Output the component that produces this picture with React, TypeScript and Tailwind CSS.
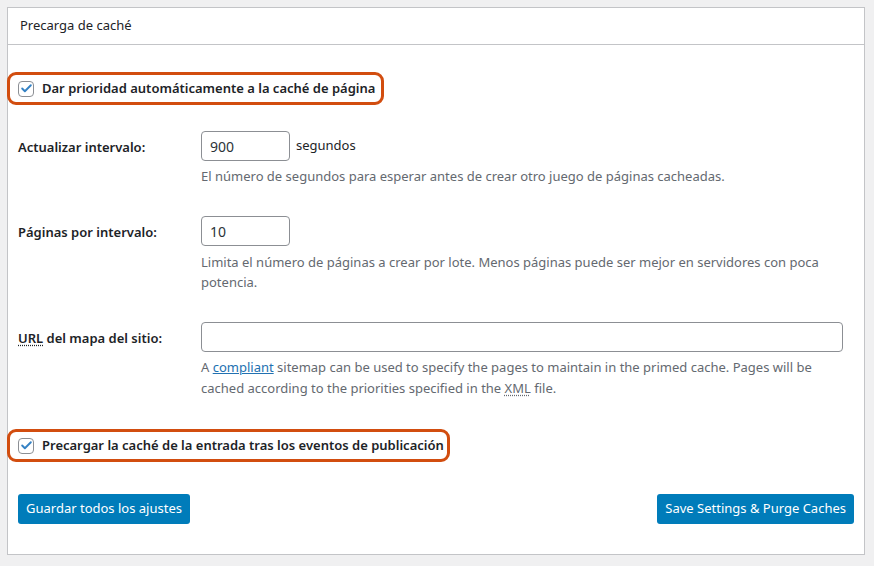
import { Check } from "lucide-react";

const font = { fontFamily: '"Noto Sans", "Open Sans", sans-serif' };

function Checkbox() {
    return (
        <span className="flex h-4 w-4 shrink-0 items-center justify-center rounded-[4px] border border-[#8c8f94] bg-white">
            <Check className="h-[13px] w-[13px] text-[#3582c4]" strokeWidth={3.5} />
        </span>
    );
}

function Highlighted({ label, width }: { label: string; width: string }) {
    return (
        <div className={`-ml-[11px] flex h-[33px] items-center gap-[8px] rounded-[9px] border-[3px] border-[#d24d0f] pl-[8px] ${width}`}>
            <Checkbox />
            <span className="text-[13px] font-semibold text-[#1d2327]">{label}</span>
        </div>
    );
}

function Row({ label, children }: { label: React.ReactNode; children: React.ReactNode }) {
    return (
        <div className="flex">
            <div className="w-[183px] shrink-0 pt-[7px] text-[13px] font-semibold text-[#1d2327]">{label}</div>
            <div className="flex-1">{children}</div>
        </div>
    );
}

export default function App() {
    return (
        <div className="min-h-[566px] bg-[#f0f0f1] pl-[7px] pr-[9px] pt-[7px]" style={font}>
            <div className="h-[548px] border border-[#c3c4c7] bg-white">
                <div className="flex h-[37px] items-center border-b border-[#c3c4c7] pl-[12px] text-[13px] text-[#1d2327]">
                    Precarga de caché
                </div>
                <div className="pl-[10px] pr-[10px]">
                    <div className="pt-[27px]">
                        <Highlighted label="Dar prioridad automáticamente a la caché de página" width="w-[377px]" />
                    </div>

                    <div className="mt-[26px]">
                        <Row label="Actualizar intervalo:">
                            <div className="flex items-center gap-[6px]">
                                <div className="flex h-[30px] w-[89px] items-center rounded-[4px] border border-[#8c8f94] px-[8px] text-[14px] text-[#2c3338]">900</div>
                                <span className="text-[13px] text-[#1d2327]">segundos</span>
                            </div>
                            <p className="mt-[5px] text-[13px] leading-[20px] text-[#646970]">
                                El número de segundos para esperar antes de crear otro juego de páginas cacheadas.
                            </p>
                        </Row>
                    </div>

                    <div className="mt-[30px]">
                        <Row label="Páginas por intervalo:">
                            <div className="flex h-[30px] w-[89px] items-center rounded-[4px] border border-[#8c8f94] px-[8px] text-[14px] text-[#2c3338]">10</div>
                            <p className="mt-[6px] pr-[20px] text-[13px] leading-[20px] text-[#646970]">
                                Limita el número de páginas a crear por lote. Menos páginas puede ser mejor en servidores con poca potencia.
                            </p>
                        </Row>
                    </div>

                    <div className="mt-[30px]">
                        <Row
                            label={
                                <>
                                    <span className="underline decoration-dotted underline-offset-2">URL</span> del mapa del sitio:
                                </>
                            }
                        >
                            <div className="mr-[11px] h-[30px] rounded-[4px] border border-[#8c8f94]" />
                            <p className="mt-[5px] pr-[20px] text-[13px] leading-[21px] text-[#646970]">
                                A <a className="text-[#2271b1] underline">compliant</a> sitemap can be used to specify the pages to maintain in the primed cache. Pages will be cached according to the priorities specified in the{" "}
                                <span className="underline decoration-dotted underline-offset-2">XML</span> file.
                            </p>
                        </Row>
                    </div>

                    <div className="mt-[30px]">
                        <Highlighted label="Precargar la caché de la entrada tras los eventos de publicación" width="w-[443px]" />
                    </div>

                    <div className="mt-[32px] flex justify-between">
                        <button className="h-[30px] rounded-[3px] bg-[#007cba] px-[8px] text-[13px] text-white">Guardar todos los ajustes</button>
                        <button className="h-[30px] rounded-[3px] bg-[#007cba] px-[8px] text-[13px] text-white">Save Settings &amp; Purge Caches</button>
                    </div>
                </div>
            </div>
        </div>
    );
}
